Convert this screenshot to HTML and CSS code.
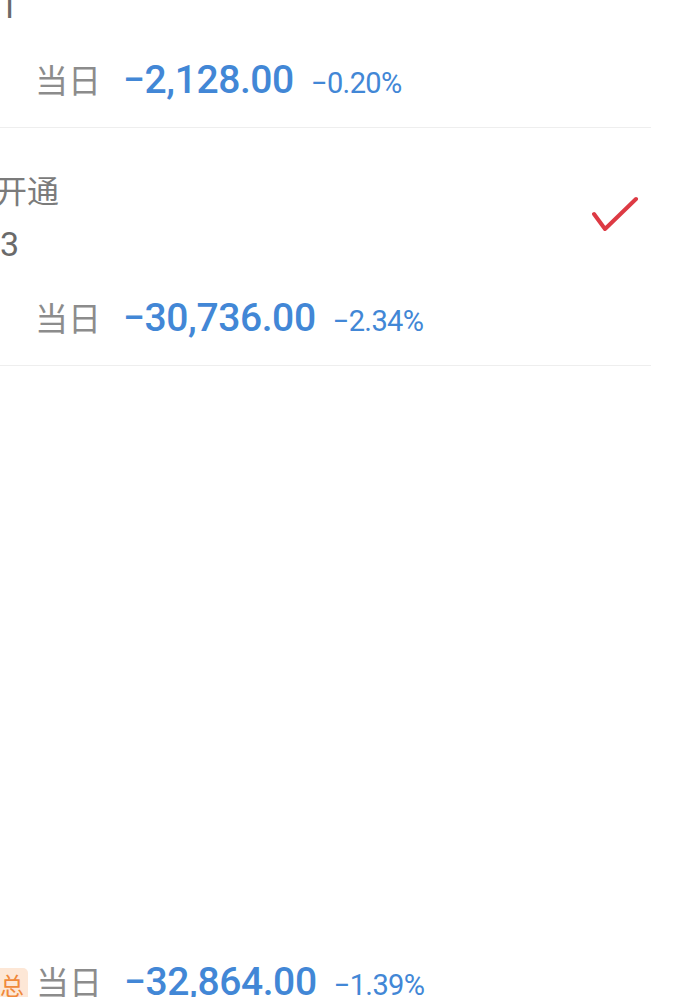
FILE: index.html
```html
<!DOCTYPE html>
<html lang="zh-CN">
<head>
  <meta charset="UTF-8">
  <meta name="viewport" content="width=device-width, initial-scale=1.0">
  <title>账户列表</title>
  <link rel="stylesheet" href="styles.css">
</head>
<body>
  <div class="list">
    <div class="row">
      <div class="row-head">
        <div class="info">
          <div class="name">融资融券</div>
          <div class="code">1</div>
        </div>
      </div>
      <div class="day">
        <span class="label">当日</span>
        <span class="amount">−2,128.00</span>
        <span class="pct">−0.20%</span>
      </div>
    </div>
    <div class="row">
      <div class="row-head">
        <div class="info">
          <div class="name">开通</div>
          <div class="code code-b">3</div>
        </div>
        <svg class="check" width="50" height="40" viewBox="0 0 50 40">
          <polyline points="2,19 13,34 44,4" fill="none" stroke="#dd3a44" stroke-width="4" stroke-linecap="round" stroke-linejoin="round"/>
        </svg>
      </div>
      <div class="day">
        <span class="label">当日</span>
        <span class="amount">−30,736.00</span>
        <span class="pct">−2.34%</span>
      </div>
    </div>
  </div>

  <div class="total">
    <span class="badge">总</span>
    <span class="label">当日</span>
    <span class="amount">−32,864.00</span>
    <span class="pct">−1.39%</span>
  </div>
</body>
</html>
```

FILE: styles.css
```css
* { box-sizing: border-box; margin: 0; padding: 0; }
html, body { width: 100%; height: 100%; }
body {
  background: #fff;
  font-family: Roboto, "Noto Sans CJK SC", sans-serif;
  overflow: hidden;
  display: flex; flex-direction: column;
}
/* 列表 */
.list { width: 651px; margin-top: -110px; }
.row {
  padding: 39px 0 26px;
  border-bottom: 1px solid #eeeeee;
}
.row-head { display: flex; align-items: center; justify-content: space-between; }
.info { display: flex; flex-direction: column; gap: 11px; }
.name {
  height: 44px; line-height: 44px;
  font-size: 32px; color: #7b7b7b;
  margin-left: -5px;
  font-family: "Noto Sans CJK SC", sans-serif;
}
.code {
  height: 44px; line-height: 44px;
  font-size: 34px; color: #6a6a6a;
  margin-left: -1px;
}
.code-b { margin-left: 0; }
.check { margin-right: 9px; margin-top: -4px; }
/* 当日盈亏 */
.day, .total {
  display: flex; align-items: baseline;
  height: 44px; line-height: 44px;
  margin-top: 29px; padding-left: 35px;
}
.label {
  font-family: "Noto Sans CJK SC", sans-serif;
  font-size: 33px; color: #8c8c8c;
  margin-right: 22px;
}
.amount {
  font-size: 39px; font-weight: 500; color: #4287d6;
  letter-spacing: -0.4px;
  margin-right: 17px;
}
.pct { font-size: 29px; color: #4287d6; letter-spacing: -0.6px; }
/* 底部合计 */
.total {
  margin-top: auto; margin-bottom: -6px;
  padding-left: 0; position: relative;
}
.badge {
  align-self: center;
  margin-left: -4px; margin-right: 8px;
  width: 32px; height: 34px; line-height: 34px;
  margin-top: 8px;
  text-align: center; border-radius: 5px;
  background: #fde7d6; color: #f0893a;
  font-family: "Noto Sans CJK SC", sans-serif; font-size: 24px;
}
```
